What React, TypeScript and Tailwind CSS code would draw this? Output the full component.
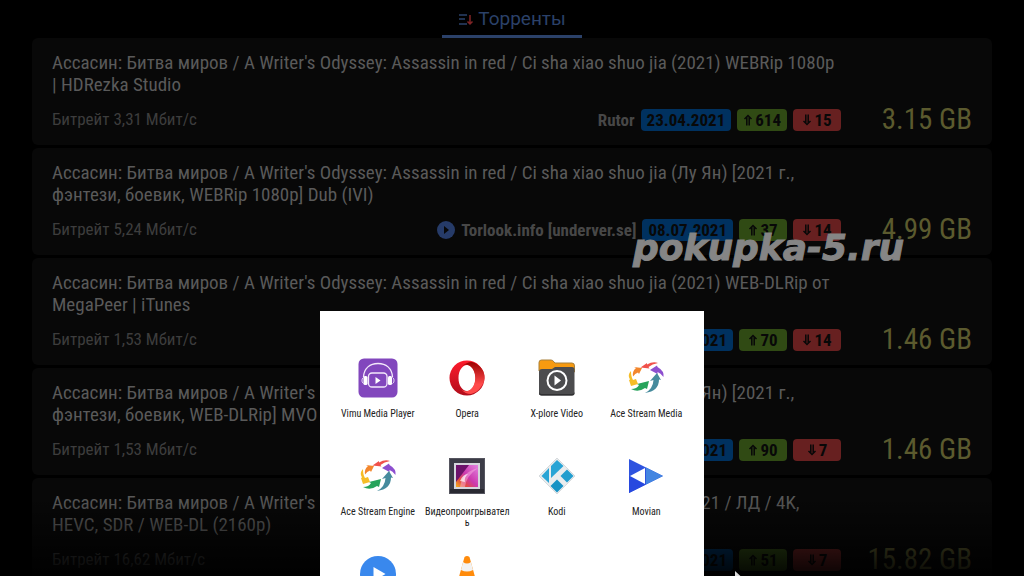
import type { ReactNode } from "react";

interface Torrent {
    id: number;
    title: string;
    bitrate: string;
    tracker: string;
    playable?: boolean;
    date: string;
    seeds: number;
    peers: number;
    size: string;
}

interface PlayerApp {
    name: string;
    icon: ReactNode;
}

const torrents: Torrent[] = [
    {
        id: 1,
        title: "Ассасин: Битва миров / A Writer's Odyssey: Assassin in red / Ci sha xiao shuo jia (2021) WEBRip 1080p\n| HDRezka Studio",
        bitrate: "3,31",
        tracker: "Rutor",
        date: "23.04.2021",
        seeds: 614,
        peers: 15,
        size: "3.15 GB",
    },
    {
        id: 2,
        title: "Ассасин: Битва миров / A Writer's Odyssey: Assassin in red / Ci sha xiao shuo jia (Лу Ян) [2021 г.,\nфэнтези, боевик, WEBRip 1080p] Dub (IVI)",
        bitrate: "5,24",
        tracker: "Torlook.info [underver.se]",
        playable: true,
        date: "08.07.2021",
        seeds: 37,
        peers: 14,
        size: "4.99 GB",
    },
    {
        id: 3,
        title: "Ассасин: Битва миров / A Writer's Odyssey: Assassin in red / Ci sha xiao shuo jia (2021) WEB-DLRip от\nMegaPeer | iTunes",
        bitrate: "1,53",
        tracker: "Rutor",
        date: "23.04.2021",
        seeds: 70,
        peers: 14,
        size: "1.46 GB",
    },
    {
        id: 4,
        title: "Ассасин: Битва миров / A Writer's Odyssey: Assassin in red / Ci sha xiao shuo jia (Лу Ян) [2021 г.,\nфэнтези, боевик, WEB-DLRip] MVO",
        bitrate: "1,53",
        tracker: "Rutor",
        date: "23.04.2021",
        seeds: 90,
        peers: 7,
        size: "1.46 GB",
    },
    {
        id: 5,
        title: "Ассасин: Битва миров / A Writer's Odyssey: Assassin in red / Ci sha xiao shuo jia / 2021 / ЛД / 4K,\nHEVC, SDR / WEB-DL (2160p)",
        bitrate: "16,62",
        tracker: "Rutor",
        date: "23.04.2021",
        seeds: 51,
        peers: 7,
        size: "15.82 GB",
    },
];

function VimuIcon() {
    return (
        <svg viewBox="0 0 40 40" className="size-10" aria-hidden="true">
            <rect x="0.5" y="0.5" width="39" height="39" rx="5.5" fill="#8247bd" />
            <path d="M5.5 19C6 10 12 5.5 20 5.500S34 10 34.500 19" fill="none" stroke="#f3e9fb" strokeWidth="1.300" />
            <rect x="10.500" y="15" width="18.500" height="14" rx="3.500" fill="none" stroke="#f3e9fb" strokeWidth="1.300" />
            <rect x="5.500" y="18" width="4" height="9" rx="1.500" fill="#fff" />
            <rect x="30" y="18" width="4" height="9" rx="1.500" fill="#fff" />
            <path d="M5.500 19.500C3.500 20.500 3.500 24.500 5.500 25.500M34.500 19.500c2 1 2 5 0 6" fill="none" stroke="#f3e9fb" />
            <path d="M17.500 19v7l5-3.500z" fill="#fff" />
        </svg>
    );
}

function OperaIcon() {
    return (
        <svg viewBox="0 0 40 40" className="size-10" aria-hidden="true">
            <defs>
                <linearGradient id="opera-left" x1="0" y1="0" x2="0" y2="1">
                    <stop offset="0" stopColor="#ff1b2d" />
                    <stop offset="1" stopColor="#b00d1b" />
                </linearGradient>
                <linearGradient id="opera-right" x1="0" y1="0" x2="0" y2="1">
                    <stop offset="0" stopColor="#9c0000" />
                    <stop offset="0.700" stopColor="#ff4b4b" />
                </linearGradient>
            </defs>
            <path fillRule="evenodd" d="M20 2.500a17.500 17.500 0 1 0 0 35 17.500 17.500 0 0 0 0-35Zm0 4.500c4.500 0 8.500 5.500 8.500 13S24.500 33 20 33s-8.500-5.500-8.500-13S15.500 7 20 7Z" fill="url(#opera-left)" />
            <path d="M14.500 8.500C18 5.500 21 4 25 4c4 1 8 4 10 7 4 6 3 13-1 18-3 4-6 6-10 7-4 0-7-1.500-9.500-4.500C17 33.500 20 34 23 32c7-5 7-19 0-24-3-2-6-1.500-8.500.5Z" fill="url(#opera-right)" />
        </svg>
    );
}

function XploreIcon() {
    return (
        <svg viewBox="0 0 40 40" className="size-10" aria-hidden="true">
            <path d="M2 13V4.500Q2 2 4.500 2H14q2 0 3 2l1 1h17q2.500 0 2.500 3v6Z" fill="#f79a10" stroke="#a8803b" />
            <path d="M2 14q0-3 3-3h10l3-2h17q2.500 0 2.500 3v23q0 2.500-2.500 2.500H4.500Q2 37.500 2 35Z" fill="#4c4c4e" />
            <path d="M2 34v1q0 2.500 2.500 2.500H35q2.500 0 2.500-2.500v-1q0 2-2.500 2H4.500Q2 36 2 34Z" fill="#303032" />
            <circle cx="20" cy="22.500" r="9.500" fill="none" stroke="#fff" strokeWidth="2" />
            <path d="M17.500 17.500v10l6.500-5z" fill="#fff" />
        </svg>
    );
}

function AceStreamIcon() {
    return (
        <svg viewBox="0 0 40 40" className="size-10" aria-hidden="true">
            <path d="M14.500 9.500 21 5v1.500Q27 3 32 5q-6 1-9.500 4l1 1.500Z" fill="#f0514b" />
            <path d="m24 12 7-4.500.5 1.500q7 4 6 10-3-4-6-5v2Z" fill="#8d4fcf" />
            <path d="m31 15 4 7-2-.500Q33 33 19 35q8-4 8.500-13l-3.500 1Z" fill="#468b9d" />
            <path d="m23 23-2 8-2-1Q12 35 5 31q6 0 8-4l-2-1Z" fill="#27a35b" />
            <path d="m12 26-7 2-2-6 1-.5Q1 17 5 13q0 6 2 9l3-1Z" fill="#f5bd27" />
            <path d="m16 10-3 6-1-1.500q-3 1-5 4Q6 13 10 10L8 9Z" fill="#f3862c" />
        </svg>
    );
}

function VideoPlayerIcon() {
    return (
        <svg viewBox="0 0 40 40" className="size-10" aria-hidden="true">
            <defs>
                <linearGradient id="picture" x1="0" y1="1" x2="1" y2="0">
                    <stop offset="0" stopColor="#f5b21b" />
                    <stop offset="0.250" stopColor="#e34b40" />
                    <stop offset="0.500" stopColor="#cc38ad" />
                    <stop offset="1" stopColor="#e183e0" />
                </linearGradient>
            </defs>
            <rect x="2.500" y="2.500" width="35" height="35" fill="#3c3c47" stroke="#55555f" />
            <path d="M3 37h34v-4H3Z" fill="#292931" />
            <rect x="7" y="7" width="26" height="26" fill="#d5d5dc" />
            <rect x="9" y="9" width="22" height="22" fill="url(#picture)" />
            <path d="M9 9h13L9 26Z" fill="#6d126b" />
            <path d="M13 31q2-15 18-19-12 8-13 19Z" fill="#f8aee0" opacity="0.500" />
            <path d="M13 25q3-7 8-7-4 3-3 8Z" fill="#fff" opacity="0.700" />
        </svg>
    );
}

function KodiIcon() {
    return (
        <svg viewBox="0 0 40 40" className="size-10" aria-hidden="true">
            <path d="M20 2 38 20 20 38 2 20Z" fill="#e9ecee" stroke="#d6dadd" />
            <path d="m20 4 6.500 6L14 22V10Z" fill="#29a4d5" />
            <path d="M12 12v15l-7.500-7Z" fill="#29a4d5" />
            <path d="m30 13.500 6.500 6.500-6.500 6.500-6.500-6.500Z" fill="#229dce" />
            <path d="m20 23.500 6.500 6.500-6.500 6.500-6.500-6.500Z" fill="#1792c4" />
        </svg>
    );
}

function MovianIcon() {
    return (
        <svg viewBox="0 0 40 40" className="size-10" aria-hidden="true">
            <path d="M3 3 37 20 3 37Z" fill="#2e53df" />
            <path d="m20 11.500 17 8.500-17 8.500Z" fill="#4385e1" />
            <path d="m3 20 17 8.500L3 37Z" fill="#2748df" />
            <path d="m4 20 15-8v16Z" fill="#fff" />
        </svg>
    );
}

function BluePlayIcon() {
    return (
        <svg viewBox="0 0 40 40" className="size-10" aria-hidden="true">
            <circle cx="20" cy="20" r="18" fill="#3988ed" />
            <path d="M15.500 13v14l12-7Z" fill="#fff" />
        </svg>
    );
}

function VlcIcon() {
    return (
        <svg viewBox="0 0 40 40" className="size-10" aria-hidden="true">
            <path d="M17.500 3q2.500-2 5 0L30 30q-10 5-20 0Z" fill="#ff8b0b" />
            <path d="m16 8-2 8q6 3 12 0l-2-8q-4 3-8 0Z" fill="#f2f2f2" />
            <path d="m7 29-3 9h32l-3-9Z" fill="#f57c00" />
        </svg>
    );
}

const players: PlayerApp[] = [
    { name: "Vimu Media Player", icon: <VimuIcon /> },
    { name: "Opera", icon: <OperaIcon /> },
    { name: "X-plore Video", icon: <XploreIcon /> },
    { name: "Ace Stream Media", icon: <AceStreamIcon /> },
    { name: "Ace Stream Engine", icon: <AceStreamIcon /> },
    { name: "Видеопроигрыватель", icon: <VideoPlayerIcon /> },
    { name: "Kodi", icon: <KodiIcon /> },
    { name: "Movian", icon: <MovianIcon /> },
    { name: "Видео", icon: <BluePlayIcon /> },
    { name: "VLC", icon: <VlcIcon /> },
];

function Arrow({ down = false }: { down?: boolean }) {
    return (
        <svg viewBox="0 0 10 14" className={down ? "h-3.5 w-2.5 rotate-180" : "h-3.5 w-2.5"} aria-hidden="true">
            <path d="M1.500 6 5 2.500 8.500 6M3.800 4V12.500M6.200 4V12.500" fill="none" stroke="currentColor" strokeWidth="1.500" />
        </svg>
    );
}

function TorrentCard({ torrent }: { torrent: Torrent }) {
    return (
        <li className="rounded-md bg-[#080808] px-5 pt-3.5 pb-3">
            <h2 className="whitespace-pre-line text-[19px] leading-[22px] text-[#5a5a5a]">{torrent.title}</h2>
            <div className="mt-2.5 flex h-[27px] items-center">
                <p className="flex-1 text-[17px] text-[#3d3d3d]">Битрейт {torrent.bitrate} Мбит/с</p>
                <div className="flex items-center gap-1.5 text-[17px] leading-[22px] font-bold text-[#080808]">
                    {torrent.playable && (
                        <svg viewBox="0 0 18 18" className="size-[18px]" aria-hidden="true">
                            <circle cx="9" cy="9" r="9" fill="#263b68" />
                            <path d="M7 5v8l5-4z" fill="#080808" />
                        </svg>
                    )}
                    <span className="text-[#474747]">{torrent.tracker}</span>
                    <span className="rounded-sm bg-[#00315f] px-1.5">{torrent.date}</span>
                    <span className="flex min-w-12 items-center justify-center gap-0.5 rounded-sm bg-[#304a14] px-1.5">
                        <Arrow />
                        {torrent.seeds}
                    </span>
                    <span className="flex min-w-12 items-center justify-center gap-0.5 rounded-sm bg-[#672020] px-1.5">
                        <Arrow down />
                        {torrent.peers}
                    </span>
                </div>
                <p className="w-[131px] text-right text-[29px] leading-[27px] text-[#5b5a2e]">{torrent.size}</p>
            </div>
        </li>
    );
}

export default function App() {
    return (
        <div className="relative h-screen overflow-hidden bg-black font-['Roboto_Condensed','Roboto',sans-serif]">
            <nav className="flex justify-center">
                <a href="#torrents" className="flex h-[38px] items-center gap-1 border-b-[3px] border-[#2b4169] px-4 pt-1 font-['Roboto',sans-serif] text-[19px] text-[#2b4169]">
                    <svg viewBox="0 0 16 16" className="size-4" aria-hidden="true">
                        <path d="M1 3h8M1 7h6M1 12h8" stroke="currentColor" strokeWidth="1.300" />
                        <path d="M12 3v9M9.500 9.500 12 12l2.500-2.500" fill="none" stroke="#812426" strokeWidth="1.500" />
                    </svg>
                    Торренты
                </a>
            </nav>
            <main id="torrents">
                <ul className="mx-8 flex flex-col gap-[3px]">
                    {torrents.map((torrent) => (
                        <TorrentCard key={torrent.id} torrent={torrent} />
                    ))}
                </ul>
            </main>

            {/* Fade at the bottom of the list */}
            <div className="absolute inset-x-0 bottom-0 h-20 bg-linear-to-b from-transparent to-black/90" />

            <p className="absolute left-[633px] top-[224px] font-['DejaVu_Sans',sans-serif] text-[36px] leading-[48px] font-bold italic text-[#858585] [-webkit-text-stroke:1px_#858585]">
                pokupka-5.ru
            </p>

            {/* Player chooser */}
            <div role="dialog" aria-label="Выбор плеера" className="absolute inset-x-0 top-[311px] mx-auto w-96 bg-white px-[13px] pt-[47px]">
                <div className="grid grid-cols-4 gap-y-[26px]">
                    {players.map((player) => (
                        <button key={player.name} type="button" className="flex h-[72px] flex-col items-center gap-2.5 px-0.5">
                            {player.icon}
                            <span className="w-full break-all text-center text-[10px] leading-[11px] text-[#222]">
                                {player.name}
                            </span>
                        </button>
                    ))}
                </div>
            </div>

            <svg viewBox="0 0 12 18" className="absolute left-[735px] top-[571px] h-[18px] w-3" aria-hidden="true">
                <path d="M0 0v16l4-4 3 6 2-1-3-6h6Z" fill="#ddd" />
            </svg>
        </div>
    );
}
